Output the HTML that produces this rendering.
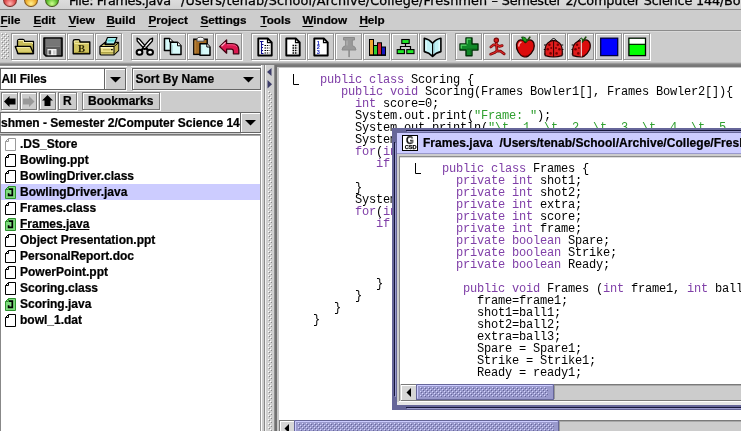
<!DOCTYPE html><html><head><meta charset="utf-8"><title>jGRASP</title><style>
html,body{margin:0;padding:0}
body{width:741px;height:431px;overflow:hidden;background:#ccc;position:relative;font-family:"Liberation Sans",sans-serif;font-size:12px;font-weight:bold;color:#000}
.a{position:absolute}
.b{position:absolute;white-space:pre;-webkit-text-stroke:0.22px #000}
.code{position:absolute;white-space:pre;font-family:"Liberation Mono",monospace;font-weight:normal;font-size:12px;letter-spacing:-0.2px;line-height:12px;color:#000}
.k{color:#8040a8}
.s{color:#30a030}
.tb{position:absolute;top:33px;width:25px;height:25px;border:1px solid #939393;box-shadow:1px 1px 0 #fff, inset 1px 1px 0 #fff;background:#ccc}
.tb svg{position:absolute;left:1px;top:1px}
u{text-decoration:underline;text-underline-offset:2px;text-decoration-thickness:1px}
</style></head><body><div id="r" style="position:absolute;left:0;top:0;width:741px;height:431px;overflow:hidden;will-change:transform">
<svg width="0" height="0" style="position:absolute"><defs>
<pattern id="bp" width="4" height="4" patternUnits="userSpaceOnUse"><rect width="4" height="4" fill="#9999cc"/><rect x="0" y="0" width="1" height="1" fill="#ccccff"/><rect x="2" y="2" width="1" height="1" fill="#ccccff"/><rect x="1" y="1" width="1" height="1" fill="#666699"/><rect x="3" y="3" width="1" height="1" fill="#666699"/></pattern>
<pattern id="bg" width="4" height="4" patternUnits="userSpaceOnUse"><rect width="4" height="4" fill="#cccccc"/><rect x="0" y="0" width="1" height="1" fill="#ffffff"/><rect x="2" y="2" width="1" height="1" fill="#ffffff"/><rect x="1" y="1" width="1" height="1" fill="#8a8a8a"/><rect x="3" y="3" width="1" height="1" fill="#8a8a8a"/></pattern>
</defs></svg>
<div class="a" style="left:0;top:0;width:741px;height:9px;background:linear-gradient(#dcdcdc,#d2d2d2);border-bottom:1px solid #8a8a8a;overflow:hidden">
<div class="a" style="left:3px;top:-7.5px;width:12px;height:12px;border-radius:50%;background:radial-gradient(circle at 50% 80%,#ffb4b0 0%,#e05050 45%,#9a2020 100%);border:1px solid rgba(60,30,20,.55)"></div>
<div class="a" style="left:24px;top:-7.5px;width:12px;height:12px;border-radius:50%;background:radial-gradient(circle at 50% 80%,#fff090 0%,#f0b030 45%,#a87010 100%);border:1px solid rgba(60,30,20,.55)"></div>
<div class="a" style="left:45px;top:-7.5px;width:12px;height:12px;border-radius:50%;background:radial-gradient(circle at 50% 80%,#d0ff90 0%,#60c030 45%,#2c7a10 100%);border:1px solid rgba(60,30,20,.55)"></div>
<div class="b" id="title" style="left:69px;top:-7px;letter-spacing:-0.32px;font-family:'DejaVu Sans','Liberation Sans',sans-serif;font-weight:normal;font-size:12.8px;line-height:16px;color:#000;-webkit-text-stroke:0.3px #000">File: Frames.java</div>
<div class="b" id="title2" style="left:181px;top:-7px;letter-spacing:0.16px;font-family:'DejaVu Sans','Liberation Sans',sans-serif;font-weight:normal;font-size:12.8px;line-height:16px;color:#000;-webkit-text-stroke:0.3px #000">/Users/tenab/School/Archive/College/Freshmen </div>
<div class="b" id="title3" style="left:491.6px;top:-7px;letter-spacing:-0.17px;font-family:'DejaVu Sans','Liberation Sans',sans-serif;font-weight:normal;font-size:12.8px;line-height:16px;color:#000;-webkit-text-stroke:0.3px #000">– Semester 2/Computer Science 144/Bowling</div>
</div>
<div class="a" style="left:0;top:10px;width:741px;height:20px;background:#cdcdcd;border-bottom:1px solid #8c8c8c"></div>
<div class="b m" style="left:0.4px;top:12px;line-height:15px;font-size:11.7px"><u>F</u>ile</div>
<div class="b m" style="left:33.4px;top:12px;line-height:15px;font-size:11.7px"><u>E</u>dit</div>
<div class="b m" style="left:68.4px;top:12px;line-height:15px;font-size:11.7px"><u>V</u>iew</div>
<div class="b m" style="left:106.4px;top:12px;line-height:15px;font-size:11.7px"><u>B</u>uild</div>
<div class="b m" style="left:148.4px;top:12px;line-height:15px;font-size:11.7px"><u>P</u>roject</div>
<div class="b m" style="left:200.4px;top:12px;line-height:15px;font-size:11.7px"><u>S</u>ettings</div>
<div class="b m" style="left:260.4px;top:12px;line-height:15px;font-size:11.7px"><u>T</u>ools</div>
<div class="b m" style="left:302.4px;top:12px;line-height:15px;font-size:11.7px"><u>W</u>indow</div>
<div class="b m" style="left:359.4px;top:12px;line-height:15px;font-size:11.7px"><u>H</u>elp</div>
<div class="a" style="left:0;top:31px;width:741px;height:1px;background:#d8d8d8"></div>
<svg class="a" style="left:1px;top:33px" width="8" height="26"><rect width="8" height="26" fill="url(#bg)"/></svg>
<div class="a" style="left:0;top:62px;width:741px;height:1px;background:#bcbcbc"></div>
<div class="a" style="left:0;top:63px;width:741px;height:1px;background:#989898"></div>
<div class="a" style="left:0;top:64px;width:741px;height:1px;background:#808080"></div>
<div class="a" style="left:0;top:65px;width:265px;height:1px;background:#909090"></div>
<div class="a" style="left:0;top:66px;width:261px;height:1px;background:#fff"></div>
<div class="tb" style="left:11px"><svg width="24" height="24" viewBox="0 0 24 24"><path d="M4.5 18.5V6.5Q4.5 4.5 6.5 4.5H10Q11.5 4.5 11.5 6.5H20.5V18.5z" fill="#c8bc58" stroke="#000" stroke-width="1.3" stroke-linejoin="round"/><path d="M5.5 6V5.5H10.5V7.5H19.5V9" fill="none" stroke="#f4ecac" stroke-width="1"/><path d="M2.2 11.5H17.5L20.5 18.5H5z" fill="#dcd070" stroke="#000" stroke-width="1.3" stroke-linejoin="round"/><path d="M3.8 12.6H16.8" stroke="#f6f0b0" stroke-width="1"/><path d="M6 17.4H19" stroke="#a89c40" stroke-width="1"/></svg></div>
<div class="tb" style="left:39px"><svg width="24" height="24" viewBox="0 0 24 24"><path d="M3 3H21V21H5L3 19z" fill="#5c5c5c" stroke="#000" stroke-width="1.6" stroke-linejoin="round"/><rect x="5" y="3.8" width="14" height="7" fill="#767676"/><rect x="5" y="10.8" width="14" height="1" fill="#8c8c8c"/><rect x="6.5" y="14" width="9" height="6.2" fill="#f4f4f4"/><rect x="7.5" y="15.3" width="2.6" height="4.2" fill="#555"/><rect x="12" y="15.3" width="2.6" height="4.2" fill="#ccc"/></svg></div>
<div class="tb" style="left:67px"><svg width="24" height="24" viewBox="0 0 24 24"><path d="M4.2 18.8V6.5Q4.2 4.8 6 4.8H9.5Q11 4.8 11 7H20.8V18.8z" fill="#d0c460" stroke="#000" stroke-width="1.4" stroke-linejoin="round"/><path d="M5.3 7.8V6H10" fill="none" stroke="#f6f0b8" stroke-width="1"/><path d="M5.3 8.6H19.6" stroke="#f0e8a0" stroke-width="1"/><path d="M5.3 17.6H19.8" stroke="#a09438" stroke-width="1"/><text x="12.6" y="16.8" font-family="Liberation Serif,serif" font-weight="bold" font-size="10.6" text-anchor="middle" fill="#2c2604">B</text></svg></div>
<div class="tb" style="left:95px"><svg width="24" height="24" viewBox="0 0 24 24"><path d="M10.5 2.5H20L17.3 9H7.8z" fill="#a4f0f0" stroke="#000" stroke-width="1.1" stroke-linejoin="round"/><path d="M10.5 5.6H17.6" stroke="#58d0d0" stroke-width="1.6"/><path d="M3 11.5L8 7.5H9L8 9.5H17L18.3 7.5H21.5V15.5L17 19.8H4Q3 19.8 3 18.5z" fill="#e0d478" stroke="#000" stroke-width="1.3" stroke-linejoin="round"/><path d="M17 11.8L21.3 8.2V15.3L17 19.5z" fill="#c4b858"/><path d="M3.8 11.8H17V19.2H4z" fill="#ece088"/><path d="M3.8 12.6H16.6" stroke="#fbf6c4" stroke-width="1.4"/><path d="M4 17.8H16.8" stroke="#b0a448" stroke-width="1.6"/><path d="M6 14.8H13" stroke="#b8ac58" stroke-width="1"/><path d="M13.5 14L16 14L15 15.8z" fill="#000"/><path d="M3 11.5H17L21.5 7.8M17 11.5V19.8" fill="none" stroke="#000" stroke-width="1"/></svg></div>
<div class="tb" style="left:131px"><svg width="24" height="24" viewBox="0 0 24 24"><path d="M4 3.2L6.2 4L13.6 12.4L11.8 14.2L4.2 6z" fill="#fff" stroke="#000" stroke-width="1.3" stroke-linejoin="round"/><path d="M19.6 3.2L17.4 4L10 12.4L11.8 14.2L19.4 6z" fill="#fff" stroke="#000" stroke-width="1.3" stroke-linejoin="round"/><path d="M10.6 13L8.4 15.4M13 13L15.2 15.4" stroke="#000" stroke-width="2.3"/><ellipse cx="6.5" cy="17.3" rx="2.9" ry="2.5" fill="#f4f4f4" stroke="#000" stroke-width="2"/><ellipse cx="17.1" cy="17.3" rx="2.9" ry="2.5" fill="#f4f4f4" stroke="#000" stroke-width="2"/><circle cx="11.8" cy="11.6" r="0.7" fill="#000"/></svg></div>
<div class="tb" style="left:159px"><svg width="24" height="24" viewBox="0 0 24 24"><path d="M3.5 3.5H8.5L12.0 7.0V15.5H3.5z" fill="#d8fafa" stroke="#000" stroke-width="1.5" stroke-linejoin="round"/><path d="M8.5 3.5V7.0H12.0" fill="#fff" stroke="#000" stroke-width="1"/><path d="M5 6H5.1M5 8H5.1M5 10H5.1M5 12H5.1" stroke="#9bb" stroke-width="1.5"/><path d="M9.5 7.3H16.5L20.0 10.8V19.5H9.5z" fill="#d8fafa" stroke="#000" stroke-width="1.5" stroke-linejoin="round"/><path d="M16.5 7.3V10.8H20.0" fill="#fff" stroke="#000" stroke-width="1"/><path d="M11.5 10.5V18" stroke="#9cc" stroke-width="1" stroke-dasharray="1 1"/></svg></div>
<div class="tb" style="left:187px"><svg width="24" height="24" viewBox="0 0 24 24"><rect x="4.8" y="4.2" width="13.4" height="15.2" fill="#a46c24" stroke="#000" stroke-width="1.4"/><path d="M6 5.5V18.5" stroke="#c89048" stroke-width="1"/><path d="M8 6.2V4Q8 2.2 11.5 2.2T15 4V6.2z" fill="#e8e8e8" stroke="#555" stroke-width="1"/><path d="M9 3.6H14" stroke="#fff" stroke-width="1.2"/><path d="M11 8.8H17.8L21 12.0V20.200000000000003H11z" fill="#d8fafa" stroke="#000" stroke-width="1.5" stroke-linejoin="round"/><path d="M17.8 8.8V12.0H21" fill="#fff" stroke="#000" stroke-width="1"/><path d="M12.8 11.5V19" stroke="#9cc" stroke-width="1" stroke-dasharray="1 1"/></svg></div>
<div class="tb" style="left:215px"><svg width="24" height="24" viewBox="0 0 24 24"><path d="M2.6 11.6L9.6 5V8.6H15Q21.8 8.6 21.8 15V18.8H16.4V16.2Q16.4 14.2 14.2 14.2H9.6V18.2z" fill="#dc1850" stroke="#400010" stroke-width="1.3" stroke-linejoin="round"/><path d="M4.5 11.2L8.6 7.4" stroke="#ffb0c8" stroke-width="1.2"/><path d="M10 9.8H15Q19 9.8 20 12" fill="none" stroke="#f05080" stroke-width="1"/></svg></div>
<div class="tb" style="left:251px"><svg width="24" height="24" viewBox="0 0 24 24"><path d="M5.3 3.5H14.8L18.7 7.4V20.5H5.3z" fill="#fff" stroke="#000" stroke-width="1.9" stroke-linejoin="round"/><path d="M14.5 3.5V7.7H18.7" fill="none" stroke="#000" stroke-width="1.2"/><path d="M8.5 6.5V19M7 6.5H10.5M8.5 9.5H10.5M8.5 12.5H10M8.5 15.5H10M8.5 18.5H10.5" fill="none" stroke="#101090" stroke-width="1.1"/><path d="M11.5 10.5H16.5M11.5 13H16.5M11.5 15.5H16.5M11.5 18H16.5" stroke="#000" stroke-width="1.2" stroke-dasharray="1.5 0.8"/></svg></div>
<div class="tb" style="left:279px"><svg width="24" height="24" viewBox="0 0 24 24"><path d="M5.3 3.5H14.8L18.7 7.4V20.5H5.3z" fill="#fff" stroke="#000" stroke-width="1.9" stroke-linejoin="round"/><path d="M14.5 3.5V7.7H18.7" fill="none" stroke="#000" stroke-width="1.2"/><path d="M11.5 10.5H16.5M11.5 13H16.5M11.5 15.5H16.5M11.5 18H16.5" stroke="#000" stroke-width="1.3" stroke-dasharray="1.6 0.8"/></svg></div>
<div class="tb" style="left:307px"><svg width="24" height="24" viewBox="0 0 24 24"><path d="M5.3 3.5H14.8L18.7 7.4V20.5H5.3z" fill="#fff" stroke="#000" stroke-width="1.9" stroke-linejoin="round"/><path d="M14.5 3.5V7.7H18.7" fill="none" stroke="#000" stroke-width="1.2"/><text x="9.2" y="9.6" font-family="Liberation Sans,sans-serif" font-weight="bold" font-size="5.6" text-anchor="middle" fill="#1020c0">1</text><text x="9.2" y="14.4" font-family="Liberation Sans,sans-serif" font-weight="bold" font-size="5.6" text-anchor="middle" fill="#1020c0">2</text><text x="9.2" y="19.2" font-family="Liberation Sans,sans-serif" font-weight="bold" font-size="5.6" text-anchor="middle" fill="#1020c0">3</text></svg></div>
<div class="tb" style="left:335px"><svg width="24" height="24" viewBox="0 0 24 24"><path d="M6.5 2.5H17.5V5H15.3V10.5Q18.8 11.5 19 15H5Q5.2 11.5 8.7 10.5V5H6.5z" fill="#999" stroke="#8a8a8a" stroke-width="1" stroke-linejoin="round"/><path d="M11.3 15H12.9V21.5L12.1 22.5L11.3 21.5z" fill="#8c8c8c"/><path d="M10 5.5V10.5" stroke="#b4b4b4" stroke-width="1.2"/></svg></div>
<div class="tb" style="left:363px"><svg width="24" height="24" viewBox="0 0 24 24"><rect x="4.5" y="4.5" width="4" height="15.5" fill="#f0a830" stroke="#000" stroke-width="1"/><rect x="8.5" y="10.5" width="4" height="9.5" fill="#30d030" stroke="#000" stroke-width="1"/><rect x="12.5" y="7.8" width="4" height="12.2" fill="#d02030" stroke="#000" stroke-width="1"/><rect x="16.5" y="12" width="4" height="8" fill="#1818c0" stroke="#000" stroke-width="1"/><path d="M4 20.3H21" stroke="#000" stroke-width="1.2"/></svg></div>
<div class="tb" style="left:391px"><svg width="24" height="24" viewBox="0 0 24 24"><path d="M12.5 8.5V11.5M7.5 14.5V11.5H17.5V14.5" fill="none" stroke="#000" stroke-width="1.2"/><rect x="8.8" y="4.5" width="7.4" height="4" fill="#20e828" stroke="#000" stroke-width="1.1"/><rect x="4.2" y="14.6" width="7.2" height="4" fill="#20e828" stroke="#000" stroke-width="1.1"/><rect x="13.8" y="14.6" width="7.2" height="4" fill="#20e828" stroke="#000" stroke-width="1.1"/></svg></div>
<div class="tb" style="left:419px"><svg width="24" height="24" viewBox="0 0 24 24"><path d="M3.3 3.2Q8 4 11.6 8.2Q15 4 19.9 3.2V16.6Q15 17.6 11.6 21.4Q8 17.6 3.3 16.6z" fill="#c0f0f4" stroke="#000" stroke-width="1.6" stroke-linejoin="round"/><path d="M11.6 8.5V21" stroke="#000" stroke-width="1.2"/><path d="M5 6V15.5M18.2 6V15.5" stroke="#e8ffff" stroke-width="1.2"/><path d="M13.5 8.5V17.5" stroke="#88c8d0" stroke-width="1" stroke-dasharray="1 1"/></svg></div>
<div class="tb" style="left:455px"><svg width="24" height="24" viewBox="0 0 24 24"><path d="M9 3H15V9H21V15H15V20.8H9V15H3V9H9z" fill="#108828" stroke="#003008" stroke-width="1.4" stroke-linejoin="round"/><path d="M10.2 8.8V4.2H13.8M4.2 13.5V10.2H9.5" fill="none" stroke="#58d868" stroke-width="1.2"/><path d="M10 14.2H14V19.6M14.5 14H19.8" fill="none" stroke="#0c6a1c" stroke-width="1.2"/></svg></div>
<div class="tb" style="left:483px"><svg width="24" height="24" viewBox="0 0 24 24"><g fill="none" stroke="#7a0808" stroke-width="2.7" stroke-linecap="round" stroke-linejoin="round"><path d="M11.3 7.5L12 15.8L9.9 17.6L5.6 19.2M12 15.8L15.5 16.2L19.2 18.9M5.8 12L8.5 9.8L11.4 9.6L14.5 11.4L17.2 10.6"/></g><g fill="none" stroke="#e02828" stroke-width="1.1" stroke-linecap="round" stroke-linejoin="round"><path d="M11.3 7.5L12 15.8L9.9 17.6L5.6 19.2M12 15.8L15.5 16.2L19.2 18.9M5.8 12L8.5 9.8L11.4 9.6L14.5 11.4L17.2 10.6"/></g><circle cx="11.3" cy="5.3" r="2.2" fill="#d82020" stroke="#7a0808" stroke-width="1.1"/></svg></div>
<div class="tb" style="left:511px"><svg width="24" height="24" viewBox="0 0 24 24"><path d="M12.3 7.6Q10.5 4.6 7.5 4.9Q4.2 5.6 3.5 9.5Q3 13.5 5.5 17.5Q7.5 20.6 10.5 21.7Q12.8 22.2 14.8 21.4Q18.5 19 20.6 14.5Q21.8 11 20.8 8Q19.5 5 16.8 4.9Q14 4.8 12.3 7.6z" fill="#dc0c0c" stroke="#200" stroke-width="1.3" stroke-linejoin="round"/><path d="M5.8 11Q5.8 8 8 7.2" fill="none" stroke="#ffa0a0" stroke-width="1.5" stroke-linecap="round"/><path d="M9 20.5Q12 22 15 20.3" fill="none" stroke="#900" stroke-width="1"/><path d="M12.4 7.2Q9.5 6 8.6 2Q12.8 1.6 14.2 5.4z" fill="#18a018" stroke="#053805" stroke-width="0.8"/><path d="M13.2 7L16.8 2.2" stroke="#1c4a0c" stroke-width="1.6" stroke-linecap="round"/></svg></div>
<div class="tb" style="left:539px"><svg width="24" height="24" viewBox="0 0 24 24"><path d="M3 10H5M2.8 14.5H4.6M3 19H5M22.2 10H20.2M22.4 14.5H20.6M22.2 19H20.2" stroke="#000" stroke-width="1"/><path d="M9.3 6.4Q12.6 0.6 15.9 6.4z" fill="#fff" stroke="#000" stroke-width="1"/><path d="M4.2 20.6Q3 12 6.6 8.2Q9.4 5.4 12.6 5.4Q15.8 5.4 18.6 8.2Q22.2 12 21 20.6Q17 22 12.6 22Q8.2 22 4.2 20.6z" fill="#e01c1c" stroke="#200" stroke-width="1.2"/><path d="M12.6 5.4V22" stroke="#300" stroke-width="1"/><g fill="#7a0000"><circle cx="8.4" cy="9.8" r="1.3"/><circle cx="6.8" cy="14.2" r="1.3"/><circle cx="9.6" cy="18.4" r="1.3"/><circle cx="10.2" cy="13" r="1"/><circle cx="16.8" cy="9.8" r="1.3"/><circle cx="18.4" cy="14.2" r="1.3"/><circle cx="15.6" cy="18.4" r="1.3"/><circle cx="15" cy="13" r="1"/></g></svg></div>
<div class="tb" style="left:567px"><svg width="24" height="24" viewBox="0 0 24 24"><defs><clipPath id="cl"><rect x="0" y="0" width="12.3" height="24"/></clipPath><clipPath id="cr"><rect x="12.3" y="0" width="12" height="24"/></clipPath></defs><g clip-path="url(#cl)"><g transform="translate(-0.3,0)"><path d="M3 10H5M2.8 14.5H4.6M3 19H5M22.2 10H20.2M22.4 14.5H20.6M22.2 19H20.2" stroke="#000" stroke-width="1"/><path d="M9.3 6.4Q12.6 0.6 15.9 6.4z" fill="#fff" stroke="#000" stroke-width="1"/><path d="M4.2 20.6Q3 12 6.6 8.2Q9.4 5.4 12.6 5.4Q15.8 5.4 18.6 8.2Q22.2 12 21 20.6Q17 22 12.6 22Q8.2 22 4.2 20.6z" fill="#e01c1c" stroke="#200" stroke-width="1.2"/><path d="M12.6 5.4V22" stroke="#300" stroke-width="1"/><g fill="#7a0000"><circle cx="8.4" cy="9.8" r="1.3"/><circle cx="6.8" cy="14.2" r="1.3"/><circle cx="9.6" cy="18.4" r="1.3"/><circle cx="10.2" cy="13" r="1"/><circle cx="16.8" cy="9.8" r="1.3"/><circle cx="18.4" cy="14.2" r="1.3"/><circle cx="15.6" cy="18.4" r="1.3"/><circle cx="15" cy="13" r="1"/></g></g></g><g clip-path="url(#cr)"><path d="M12.3 7.6Q10.5 4.6 7.5 4.9Q4.2 5.6 3.5 9.5Q3 13.5 5.5 17.5Q7.5 20.6 10.5 21.7Q12.8 22.2 14.8 21.4Q18.5 19 20.6 14.5Q21.8 11 20.8 8Q19.5 5 16.8 4.9Q14 4.8 12.3 7.6z" fill="#dc0c0c" stroke="#200" stroke-width="1.3" stroke-linejoin="round"/><path d="M5.8 11Q5.8 8 8 7.2" fill="none" stroke="#ffa0a0" stroke-width="1.5" stroke-linecap="round"/><path d="M9 20.5Q12 22 15 20.3" fill="none" stroke="#900" stroke-width="1"/><path d="M12.4 7.2Q9.5 6 8.6 2Q12.8 1.6 14.2 5.4z" fill="#18a018" stroke="#053805" stroke-width="0.8"/><path d="M13.2 7L16.8 2.2" stroke="#1c4a0c" stroke-width="1.6" stroke-linecap="round"/></g><path d="M12.3 4.5V21.5" stroke="#fff" stroke-width="0.9"/></svg></div>
<div class="tb" style="left:595px"><svg width="24" height="24" viewBox="0 0 24 24"><rect x="3.7" y="3.2" width="17" height="17.4" fill="#0000ff" stroke="#000040" stroke-width="1.3"/></svg></div>
<div class="tb" style="left:623px"><svg width="24" height="24" viewBox="0 0 24 24"><rect x="3.9" y="3.2" width="16.6" height="17.4" fill="#00ff00" stroke="#000" stroke-width="1.3"/><rect x="4.6" y="3.9" width="15.2" height="5" fill="#fff"/><path d="M4 9.3H20.4" stroke="#000" stroke-width="1"/></svg></div>
<div class="a" style="left:0;top:68px;width:104px;height:22px;background:#fff;border-left:1px solid #666;border-top:1px solid #666;border-bottom:1px solid #666;box-sizing:border-box"></div>
<div class="b" style="left:1.5px;top:72px;line-height:15px;letter-spacing:-0.1px">All Files</div>
<div class="a" style="left:104px;top:68px;width:22px;height:22px;background:#ccc;border:1px solid #666;box-sizing:border-box;box-shadow:inset 1px 1px 0 #fff"></div>
<svg class="a" style="left:109.5px;top:77px" width="12" height="6"><path d="M0 0h11L5.5 5.5z" fill="#000"/></svg>
<div class="a" style="left:126px;top:69px;width:1px;height:22px;background:#fff"></div>
<div class="a" style="left:0;top:90px;width:127px;height:1px;background:#fff"></div>
<div class="a" style="left:127px;top:66px;width:4px;height:25px;background:#d4d4d4"></div>
<div class="a" style="left:131px;top:68px;width:1px;height:22px;background:#f0f0f0"></div>
<div class="a" style="left:132px;top:68px;width:129px;height:22px;background:#ccc;border:1px solid #666;box-sizing:border-box;box-shadow:inset 1px 1px 0 #fff,1px 1px 0 #fff"></div>
<div class="b" style="left:135.5px;top:72px;line-height:15px">Sort By Name</div>
<svg class="a" style="left:243px;top:77px" width="12" height="6"><path d="M0 0h11L5.5 5.5z" fill="#000"/></svg>
<div class="a" style="left:1px;top:92px;width:17px;height:18px;background:#ccc;border:1px solid #7a7a7a;box-sizing:border-box;box-shadow:inset 1px 1px 0 #fff,1px 1px 0 #fff"></div>
<div class="a" style="left:20px;top:92px;width:17px;height:18px;background:#ccc;border:1px solid #7a7a7a;box-sizing:border-box;box-shadow:inset 1px 1px 0 #fff,1px 1px 0 #fff"></div>
<div class="a" style="left:39px;top:92px;width:17px;height:18px;background:#ccc;border:1px solid #7a7a7a;box-sizing:border-box;box-shadow:inset 1px 1px 0 #fff,1px 1px 0 #fff"></div>
<div class="a" style="left:58px;top:92px;width:19px;height:18px;background:#ccc;border:1px solid #7a7a7a;box-sizing:border-box;box-shadow:inset 1px 1px 0 #fff,1px 1px 0 #fff"></div>
<div class="a" style="left:82px;top:92px;width:78px;height:18px;background:#ccc;border:1px solid #7a7a7a;box-sizing:border-box;box-shadow:inset 1px 1px 0 #fff,1px 1px 0 #fff"></div>
<svg class="a" style="left:4px;top:96px" width="12" height="12"><path d="M0 5.5L5.5 0V2.5H11.5V8.5H5.5V11z" fill="#000"/></svg>
<svg class="a" style="left:23px;top:96px" width="12" height="12"><path d="M11.5 5.5L6 0V2.5H0V8.5H6V11z" fill="#999"/></svg>
<svg class="a" style="left:42px;top:95px" width="12" height="12"><path d="M5.5 0L0 5.5H2.5V11H8.5V5.5H11z" fill="#000"/></svg>
<div class="b" style="left:63px;top:94px;line-height:15px">R</div>
<div class="b" style="left:88px;top:94px;line-height:15px">Bookmarks</div>
<div class="a" style="left:0;top:112px;width:240px;height:21px;background:#fff;border-left:1px solid #777;border-top:1px solid #666;border-bottom:1px solid #666;box-sizing:border-box;overflow:hidden"><div class="b" style="left:0px;top:3px;line-height:15px;font-size:12px">shmen - Semester 2/Computer Science 144/Bowling</div></div>
<div class="a" style="left:240px;top:112px;width:21px;height:21px;background:#ccc;border:1px solid #666;box-sizing:border-box;box-shadow:inset 1px 1px 0 #fff,1px 1px 0 #fff"></div>
<svg class="a" style="left:245px;top:120px" width="12" height="6"><path d="M0 0h11L5.5 5.5z" fill="#000"/></svg>
<div class="a" style="left:0;top:134px;width:261px;height:297px;background:#fff;border-left:1px solid #888;border-top:1px solid #777;border-right:1px solid #999;box-sizing:border-box"></div>
<div class="a" style="left:0;top:135px;width:260px;height:1px;background:#aaa"></div>
<div class="a" style="left:1px;top:184px;width:259px;height:16px;background:#ccccff"></div>
<svg class="a" style="left:4px;top:137px" width="13" height="15"><path d="M1.5 4.5L4.5 1.5H11.5V13.5H1.5z" fill="#fff" stroke="#999" stroke-width="1"/><path d="M1.5 4.5H4.5V1.5" fill="none" stroke="#999" stroke-width="1"/></svg>
<div class="b" style="left:20px;top:136px;line-height:16px">.DS_Store</div>
<svg class="a" style="left:4px;top:153px" width="13" height="15"><path d="M1.5 4.5L4.5 1.5H11.5V13.5H1.5z" fill="#fff" stroke="#000" stroke-width="1"/><path d="M1.5 4.5H4.5V1.5" fill="none" stroke="#000" stroke-width="1"/></svg>
<div class="b" style="left:20px;top:152px;line-height:16px">Bowling.ppt</div>
<svg class="a" style="left:4px;top:169px" width="13" height="15"><path d="M1.5 4.5L4.5 1.5H11.5V13.5H1.5z" fill="#fff" stroke="#000" stroke-width="1"/><path d="M1.5 4.5H4.5V1.5" fill="none" stroke="#000" stroke-width="1"/></svg>
<div class="b" style="left:20px;top:168px;line-height:16px">BowlingDriver.class</div>
<svg class="a" style="left:4px;top:185px" width="13" height="15"><path d="M1.5 4.5L4.5 1.5H11.5V13.5H1.5z" fill="#7edc7e" stroke="#2c902c" stroke-width="1"/><path d="M1.5 4.5H4.5V1.5" fill="none" stroke="#2c902c" stroke-width="1"/><path d="M5 4.2H9.2M8.3 4V10.4H4.6V8.2" fill="none" stroke="#000" stroke-width="1.7"/></svg>
<div class="b" style="left:20px;top:184px;line-height:16px">BowlingDriver.java</div>
<svg class="a" style="left:4px;top:201px" width="13" height="15"><path d="M1.5 4.5L4.5 1.5H11.5V13.5H1.5z" fill="#fff" stroke="#000" stroke-width="1"/><path d="M1.5 4.5H4.5V1.5" fill="none" stroke="#000" stroke-width="1"/></svg>
<div class="b" style="left:20px;top:200px;line-height:16px">Frames.class</div>
<svg class="a" style="left:4px;top:217px" width="13" height="15"><path d="M1.5 4.5L4.5 1.5H11.5V13.5H1.5z" fill="#7edc7e" stroke="#2c902c" stroke-width="1"/><path d="M1.5 4.5H4.5V1.5" fill="none" stroke="#2c902c" stroke-width="1"/><path d="M5 4.2H9.2M8.3 4V10.4H4.6V8.2" fill="none" stroke="#000" stroke-width="1.7"/></svg>
<div class="b" style="left:20px;top:216px;line-height:16px;text-decoration:underline;text-underline-offset:1px">Frames.java</div>
<svg class="a" style="left:4px;top:233px" width="13" height="15"><path d="M1.5 4.5L4.5 1.5H11.5V13.5H1.5z" fill="#fff" stroke="#000" stroke-width="1"/><path d="M1.5 4.5H4.5V1.5" fill="none" stroke="#000" stroke-width="1"/></svg>
<div class="b" style="left:20px;top:232px;line-height:16px">Object Presentation.ppt</div>
<svg class="a" style="left:4px;top:249px" width="13" height="15"><path d="M1.5 4.5L4.5 1.5H11.5V13.5H1.5z" fill="#fff" stroke="#000" stroke-width="1"/><path d="M1.5 4.5H4.5V1.5" fill="none" stroke="#000" stroke-width="1"/></svg>
<div class="b" style="left:20px;top:248px;line-height:16px">PersonalReport.doc</div>
<svg class="a" style="left:4px;top:265px" width="13" height="15"><path d="M1.5 4.5L4.5 1.5H11.5V13.5H1.5z" fill="#fff" stroke="#000" stroke-width="1"/><path d="M1.5 4.5H4.5V1.5" fill="none" stroke="#000" stroke-width="1"/></svg>
<div class="b" style="left:20px;top:264px;line-height:16px">PowerPoint.ppt</div>
<svg class="a" style="left:4px;top:281px" width="13" height="15"><path d="M1.5 4.5L4.5 1.5H11.5V13.5H1.5z" fill="#fff" stroke="#000" stroke-width="1"/><path d="M1.5 4.5H4.5V1.5" fill="none" stroke="#000" stroke-width="1"/></svg>
<div class="b" style="left:20px;top:280px;line-height:16px">Scoring.class</div>
<svg class="a" style="left:4px;top:297px" width="13" height="15"><path d="M1.5 4.5L4.5 1.5H11.5V13.5H1.5z" fill="#7edc7e" stroke="#2c902c" stroke-width="1"/><path d="M1.5 4.5H4.5V1.5" fill="none" stroke="#2c902c" stroke-width="1"/><path d="M5 4.2H9.2M8.3 4V10.4H4.6V8.2" fill="none" stroke="#000" stroke-width="1.7"/></svg>
<div class="b" style="left:20px;top:296px;line-height:16px">Scoring.java</div>
<svg class="a" style="left:4px;top:313px" width="13" height="15"><path d="M1.5 4.5L4.5 1.5H11.5V13.5H1.5z" fill="#fff" stroke="#000" stroke-width="1"/><path d="M1.5 4.5H4.5V1.5" fill="none" stroke="#000" stroke-width="1"/></svg>
<div class="b" style="left:20px;top:312px;line-height:16px">bowl_1.dat</div>
<div class="a" style="left:261px;top:65px;width:1px;height:366px;background:#fff"></div>
<div class="a" style="left:262px;top:65px;width:2px;height:366px;background:#ccc"></div>
<div class="a" style="left:264px;top:65px;width:1px;height:366px;background:#888"></div>
<div class="a" style="left:265px;top:65px;width:1px;height:366px;background:#f4f4f4"></div>
<div class="a" style="left:266px;top:65px;width:8px;height:366px;background:#d0d0d0"></div>
<svg class="a" style="left:268px;top:91px" width="4" height="340"><defs><pattern id="bd" width="4" height="4" patternUnits="userSpaceOnUse"><rect width="4" height="4" fill="#d0d0d0"/><rect x="0" y="0" width="1" height="1" fill="#fff"/><rect x="2" y="2" width="1" height="1" fill="#fff"/><rect x="1" y="1" width="1" height="1" fill="#8a8a8a"/><rect x="3" y="3" width="1" height="1" fill="#8a8a8a"/></pattern></defs><rect width="4" height="340" fill="url(#bd)"/></svg>
<svg class="a" style="left:266px;top:67px" width="8" height="24"><path d="M5.5 1v8L1 5z" fill="#3c3c68"/><path d="M1.5 13v8.4L6 17.2z" fill="#3c3c68"/></svg>
<div class="a" style="left:274px;top:65px;width:467px;height:366px;background:#fff"></div>
<div class="a" style="left:274px;top:65px;width:467px;height:2px;background:#777"></div>
<div class="a" style="left:277px;top:67px;width:464px;height:1px;background:#c4c4c4"></div>
<div class="a" style="left:274px;top:65px;width:1px;height:366px;background:#8c8c8c"></div>
<div class="a" style="left:275px;top:65px;width:2px;height:366px;background:#707070"></div>
<div class="a" style="left:277px;top:67px;width:2px;height:364px;background:#c8c8c8"></div>
<svg class="a" style="left:293px;top:74px" width="7" height="12"><path d="M0.5 0V10.5H6" fill="none" stroke="#000" stroke-width="1"/></svg>
<div class="code" style="left:320px;top:74px"><span class="k">public class</span> Scoring {</div>
<div class="code" style="left:341px;top:86px"><span class="k">public void</span> Scoring(Frames Bowler1[], Frames Bowler2[]){</div>
<div class="code" style="left:355px;top:98px"><span class="k">int</span> score=0;</div>
<div class="code" style="left:355px;top:110px">System.out.print(<span class="s">&quot;Frame: &quot;</span>);</div>
<div class="code" style="left:355px;top:122px">System.out.println(<span class="s">&quot;\t  1  \t  2  \t  3  \t  4  \t  5  \t</span></div>
<div class="code" style="left:355px;top:134px">System.out.println();</div>
<div class="code" style="left:355px;top:146px"><span class="k">for</span>(<span class="k">int</span> i=0;i&lt;10;i++){</div>
<div class="code" style="left:376px;top:158px"><span class="k">if</span> (i&lt;9)</div>
<div class="code" style="left:355px;top:182px">}</div>
<div class="code" style="left:355px;top:194px">System.out.println();</div>
<div class="code" style="left:355px;top:206px"><span class="k">for</span>(<span class="k">int</span> i=0;i&lt;10;i++){</div>
<div class="code" style="left:376px;top:218px"><span class="k">if</span> (i&lt;9)</div>
<div class="code" style="left:376px;top:278px">}</div>
<div class="code" style="left:355px;top:290px">}</div>
<div class="code" style="left:334px;top:302px">}</div>
<div class="code" style="left:313px;top:314px">}</div>
<div class="a" style="left:279px;top:420px;width:462px;height:17px;background:#ccc;border-top:1px solid #7a7a7a;border-bottom:1px solid #7a7a7a;box-sizing:border-box"></div>
<div class="a" style="left:279px;top:421px;width:462px;height:1px;background:#a8a8a8"></div>
<div class="a" style="left:279px;top:421px;width:16px;height:15px;background:#d6d6d6;border-left:1px solid #fff;border-top:1px solid #fff;border-right:1px solid #7a7a7a;box-sizing:border-box"></div>
<svg class="a" style="left:284px;top:424px" width="6" height="10"><path d="M5 0v9L0.5 4.5z" fill="#000"/></svg>
<svg class="a" style="left:294px;top:420px" width="266" height="16"><defs><pattern id="bp1" x="0" y="3" width="4" height="4" patternUnits="userSpaceOnUse"><rect width="4" height="4" fill="#9999cc"/><rect x="0" y="0" width="1" height="1" fill="#d8d8ff"/><rect x="2" y="2" width="1" height="1" fill="#d8d8ff"/><rect x="1" y="1" width="1" height="1" fill="#666699"/><rect x="3" y="3" width="1" height="1" fill="#666699"/></pattern></defs><rect width="265" height="16" fill="#9999cc"/><rect x="4" y="3" width="256" height="10" fill="url(#bp1)"/><path d="M0.5 16V0.5H264.5V15.5H0.5" fill="none" stroke="#666699"/><path d="M1.5 14.5V1.5H263.5" fill="none" stroke="#ccccff"/><rect x="265" y="1" width="1" height="14" fill="#999"/></svg>
<div class="a" style="left:279px;top:420px;width:1px;height:11px;background:#7a7a7a"></div>
<div class="a" style="left:280px;top:421px;width:1px;height:10px;background:#fff"></div>
<div class="a" id="ifr" style="left:392px;top:128px;width:349px;height:282px;background:#666699"></div>
<div class="a" style="left:406px;top:130px;width:335px;height:1px;background:#16163a"></div>
<div class="a" style="left:407px;top:131px;width:334px;height:1px;background:#9999cc"></div>
<div class="a" style="left:394px;top:142px;width:1px;height:254px;background:#16163a"></div>
<div class="a" style="left:395px;top:143px;width:1px;height:254px;background:#9999cc"></div>
<div class="a" style="left:406px;top:407px;width:335px;height:1px;background:#16163a"></div>
<div class="a" style="left:407px;top:408px;width:334px;height:1px;background:#9999cc"></div>
<div class="a" style="left:397px;top:133px;width:344px;height:272px;background:#ccc"></div>
<div class="a" style="left:397px;top:133px;width:344px;height:20px;background:#ccccff;border-bottom:1px solid #9999cc"></div>
<svg class="a" style="left:402px;top:135px" width="16" height="16"><defs><linearGradient id="gg" x1="0" y1="0" x2="1" y2="0"><stop offset="0" stop-color="#000"/><stop offset="0.6" stop-color="#333"/><stop offset="1" stop-color="#999"/></linearGradient></defs><rect x="0.5" y="0.5" width="15" height="15" fill="#fff" stroke="#000"/><text x="7.8" y="9.2" text-anchor="middle" font-family="Liberation Sans,sans-serif" font-weight="bold" font-size="10" fill="url(#gg)" stroke="#333" stroke-width="0.3">G</text><text x="8.6" y="13.9" text-anchor="middle" font-family="Liberation Sans,sans-serif" font-weight="bold" font-size="5.6" fill="#000" stroke="#000" stroke-width="0.25">CSD</text></svg>
<div class="b" style="left:423px;top:136px;line-height:15px;font-size:12px;letter-spacing:0.04px">Frames.java  /Users/tenab/School/Archive/College/Freshmen - Semester 2</div>
<div class="a" style="left:399px;top:156px;width:342px;height:246px;background:#fff;border-left:1px solid #8c8c8c;border-top:1px solid #8c8c8c;box-sizing:border-box"></div>
<div class="a" style="left:400px;top:157px;width:341px;height:1px;background:#dcdcdc"></div>
<svg class="a" style="left:415px;top:163px" width="7" height="12"><path d="M0.5 0V10.5H6" fill="none" stroke="#000" stroke-width="1"/></svg>
<div class="code" style="left:442px;top:163px"><span class="k">public class</span> Frames {</div>
<div class="code" style="left:456px;top:175px"><span class="k">private int</span> shot1;</div>
<div class="code" style="left:456px;top:187px"><span class="k">private int</span> shot2;</div>
<div class="code" style="left:456px;top:199px"><span class="k">private int</span> extra;</div>
<div class="code" style="left:456px;top:211px"><span class="k">private int</span> score;</div>
<div class="code" style="left:456px;top:223px"><span class="k">private int</span> frame;</div>
<div class="code" style="left:456px;top:235px"><span class="k">private boolean</span> Spare;</div>
<div class="code" style="left:456px;top:247px"><span class="k">private boolean</span> Strike;</div>
<div class="code" style="left:456px;top:259px"><span class="k">private boolean</span> Ready;</div>
<div class="code" style="left:463px;top:283px"><span class="k">public void</span> Frames (<span class="k">int</span> frame1, <span class="k">int</span> ball1, <span class="k">int</span> ball2</div>
<div class="code" style="left:477px;top:295px">frame=frame1;</div>
<div class="code" style="left:477px;top:307px">shot1=ball1;</div>
<div class="code" style="left:477px;top:319px">shot2=ball2;</div>
<div class="code" style="left:477px;top:331px">extra=ball3;</div>
<div class="code" style="left:477px;top:343px">Spare = Spare1;</div>
<div class="code" style="left:477px;top:355px">Strike = Strike1;</div>
<div class="code" style="left:477px;top:367px">Ready = ready1;</div>
<div class="a" style="left:401px;top:384px;width:340px;height:17px;background:#ccc;border-top:1px solid #7a7a7a;border-bottom:1px solid #7a7a7a;box-sizing:border-box"></div>
<div class="a" style="left:401px;top:385px;width:340px;height:1px;background:#a8a8a8"></div>
<div class="a" style="left:401px;top:385px;width:16px;height:15px;background:#d6d6d6;border-left:1px solid #fff;border-top:1px solid #fff;border-right:1px solid #7a7a7a;box-sizing:border-box"></div>
<svg class="a" style="left:406px;top:388px" width="6" height="10"><path d="M5 0v9L0.5 4.5z" fill="#000"/></svg>
<svg class="a" style="left:416px;top:384px" width="139" height="16"><defs><pattern id="bp2" x="0" y="3" width="4" height="4" patternUnits="userSpaceOnUse"><rect width="4" height="4" fill="#9999cc"/><rect x="0" y="0" width="1" height="1" fill="#d8d8ff"/><rect x="2" y="2" width="1" height="1" fill="#d8d8ff"/><rect x="1" y="1" width="1" height="1" fill="#666699"/><rect x="3" y="3" width="1" height="1" fill="#666699"/></pattern></defs><rect width="138" height="16" fill="#9999cc"/><rect x="4" y="3" width="128" height="10" fill="url(#bp2)"/><path d="M0.5 16V0.5H137.5V15.5H0.5" fill="none" stroke="#666699"/><path d="M1.5 14.5V1.5H136.5" fill="none" stroke="#ccccff"/><rect x="138" y="1" width="1" height="14" fill="#999"/></svg>
<div class="a" style="left:400px;top:384px;width:1px;height:17px;background:#d0d0d0"></div>
<div class="a" style="left:399px;top:401px;width:342px;height:1px;background:#fff"></div>
<div class="a" style="left:397px;top:402px;width:344px;height:3px;background:#e6e6e6"></div>
</div></body></html>
